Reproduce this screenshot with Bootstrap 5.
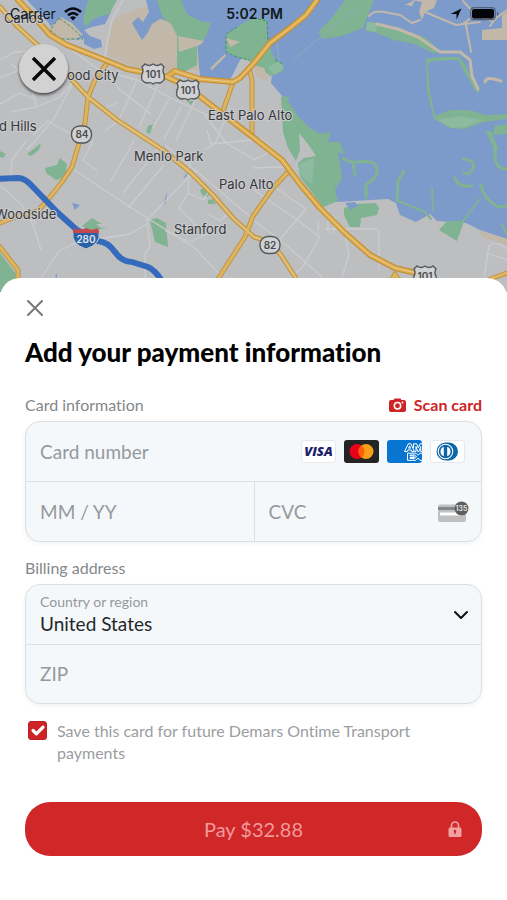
<!DOCTYPE html>
<html lang="en">
<head>
<meta charset="utf-8">
<meta name="viewport" content="width=device-width, initial-scale=1">
<title>Add your payment information</title>
<link href="https://cdn.jsdelivr.net/npm/bootstrap@5.3.0/dist/css/bootstrap.min.css" rel="stylesheet">
<style>
  body { font-family: Lato, "Open Sans", sans-serif; font-variant-ligatures: none; background: #fff; color: #111; }
  .map-area { height: 292px; background: #bdbec0; }
  .map-area > svg { display: block; width: 100%; height: 100%; }
  .map-area text { font-family: Inter, Roboto, sans-serif; }
  .map-label { font-size: 13px; fill: #35373a; stroke: #c9cacc; stroke-width: 2px; paint-order: stroke; }
  .status-bar { font-family: Inter, sans-serif; font-size: 14px; line-height: 28px; color: #101820; padding: 0 8px 0 10px; }
  .status-bar > * { flex: 1 1 0; }
  .map-close { top: 44px; left: 19px; width: 49px; height: 49px; background: #d2d2d2; box-shadow: 0 2px 3px rgba(0,0,0,.6); }
  .sheet { margin-top: -14px; border-radius: 20px 20px 0 0; padding: 20px 25px 44px; }
  .sheet-close { width: 20px; height: 20px; }
  .sheet-title { font-size: 26px; line-height: 32px; font-weight: 900; color: #000; margin: 18px 0 25px; }
  .caption { font-size: 16px; line-height: 24px; color: #858789; }
  .billing-caption { margin: 14px 0 4px; }
  .scan { font-size: 16px; line-height: 24px; color: #cf2427; }
  .field-box { background: #f4f8fb; border: 1px solid #dcdfe1; border-radius: 15px; box-shadow: 0 2px 5px rgba(0,0,0,.05); }
  .field-row { height: 59px; padding: 0 12px 0 14px; }
  .field-row + .field-row, .split { border-top: 1px solid #dcdfe1; }
  .split .field-row + .field-row { border-top: 0; border-left: 1px solid #dcdfe1; }
  .field-row .form-control { font-size: 19px; line-height: 28px; color: #222; min-width: 0; }
  .field-row .form-control::placeholder { color: #96999c; opacity: 1; }
  .region-label { font-size: 14px; line-height: 18px; color: #96999c; }
  .region-select { appearance: none; font-size: 19px; line-height: 26px; color: #24272a; outline-offset: 2px; }
  .save-row { gap: 10px; padding-right: 40px; }
  .save-check.form-check-input { width: 19px; height: 19px; margin: 1px 0 0 3px; border-radius: 3px; }
  .save-check.form-check-input:checked { background-color: #cf2427; border-color: #b92024; background-size: 22px 22px; }
  .save-text { font-size: 16px; line-height: 22px; color: #9b9d9f; }
  .pay { height: 54px; border-radius: 25px; background: #d02729; color: #f29a9b; font-size: 20px; margin-top: 38px; }
  .pay:hover { background: #b92024; color: #f7b5b5; }
  .pay-lock { right: 20px; top: 18px; }
  .brand text { font-family: "Open Sans", sans-serif; }
</style>
<script src="https://cdn.jsdelivr.net/npm/bootstrap@5.3.0/dist/js/bootstrap.bundle.min.js"></script>
</head>
<body>
<div class="min-vh-100 d-flex flex-column">
  <header class="map-area position-relative overflow-hidden">
    <svg viewBox="0 0 507 292" preserveAspectRatio="xMidYMin slice" role="img" aria-label="Map of Palo Alto area">
      <rect width="507" height="292" fill="#bdbec0"/>
      <!-- salt flats -->
      <path fill="#c1b8aa" d="M118 16 135 10 160 0H200V70L172 72 150 69 128 65 108 56 107 40 112 24Z"/>
      <!-- water -->
      <g fill="#7c9aca">
        <path d="M27 0H115L110 14 105 24 92 27 84 30 90 36 101 40 102 47 94 49 84 44 84 38 72 40 58 38 48 22Z"/>
        <path d="M146 0H160L165 15 171 22 160 19 152 24 147 34 142 40 136 30 132 23 138 17 143 22 149 12Z"/>
        <path d="M178 0H507V239L480 230 466 223 437 221 430 214 416 222 400 215 396 203 388 199 336 202 326 150 310 130 296 117 283 97 271 83 273 66 265 44 240 60 230 80 200 77 197 41 178 36Z"/>
      </g>
      <!-- parks and marshes -->
      <g fill="#80b391">
        <path d="M88 0H117L109 14 95 18 85 27 83 18Z"/>
        <path d="M157 0H181L187 14 200 21 211 23 207 34 202 43 197 43 197 65 184 72 177 70 177 36 171 24 163 18Z"/>
        <path d="M226 34 237 27 252 18 266 19 268 42 275 60 283 64 282 72 270 76 252 62 237 57 226 52Z"/>
        <path d="M345 0H374L363 28 342 36 323 39 318 32 330 20Z"/>
        <path d="M367 21 381 24 402 30 425 37 439 50 434 54 415 44 394 40 374 32 366 31Z"/>
        <path d="M426 59 440 57 460 57 467 68 474 80 480 92 476 92 465 73 458 60 432 61 428 64 430 91 435 116 450 110 470 110 485 115 507 114V119L484 122 465 129 450 128 434 119 427 91Z"/>
        <path d="M281 97 289 96 288 101 298 116 310 128 320 134 331 132 328 142 340 142 344 154 338 152 342 178 335 190 338 201 323 207 311 191 300 177 298 163 304 158 316 156 308 144 299 133 300 150 296 161 288 148 283 132Z"/>
        <path d="M344 208 356 204 376 203 379 208 377 215 361 218 360 227 350 227 344 215Z"/>
        <path d="M447 221 464 221 457 241 447 235 439 230Z"/>
        <path d="M150 220 157 218 166 223 168 247 155 242Z"/>
        <path d="M45 168 57 165 60 158 67 164 65 177 56 180 46 173Z"/>
        <path d="M27 154 41 143 39 150 31 156ZM0 151 6 154 3 158 0 157ZM148 126 153 124 150 134 146 132ZM187 101 194 101 191 105ZM200 190 206 187 210 193 208 197 202 195ZM208 200 213 199 216 204 208 204Z"/>
        <path d="M82 226 92 218 102 224 96 224 101 228 108 227 98 230 87 229Z"/>
        <path d="M0 253 16 274 17 292H0ZM494 126 507 124V134L493 135ZM485 131 491 131 499 150 494 148Z"/>
      </g>
      <g fill="none" stroke="#80b391" stroke-linecap="round" stroke-linejoin="round">
        <path stroke-width="3" d="M343 158Q350 163 357 162T370 162 377 169 372 180 366 185 366 198M353 163 355 175M404 171 398 181 397 200M463 159Q476 160 473 168T464 173M455 178Q458 188 472 186M492 140Q496 147 495 158 497 170 507 169M481 185Q484 200 499 207L507 206"/>
        <path stroke-width="2" d="M396 200 425 212 431 219M432 188 433 210M463 221 480 199M502 225 507 235"/>
      </g>
      <path fill="#8dbb9f" d="M438 120 460 116 482 120 465 127 452 128ZM300 163 314 158 312 185 299 174ZM268 67 280 61 284 69 274 75ZM367 22 377 23 376 32 366 30Z"/>
      <g fill="#c1b8aa">
        <path d="M178 36 204 41 200 45 179 52ZM226 38 240 42 230 47ZM210 68 225 54 226 56 212 70ZM48 29 61 17 72 23 83 35 74 40 58 38Z"/>
        <path d="M410 0H437L434 8 425 12 422 20 419 12 422 2ZM482 30 502 28V15L507 12V40H482ZM405 5 415 0 412 6Z"/>
        <path d="M480 231 507 239V245L482 237ZM254 65 264 68 269 82 256 76Z"/>
      </g>
      <g fill="none" stroke="#c1b8aa" stroke-linecap="round" stroke-linejoin="round">
        <path stroke-width="2" d="M369 16Q374 10 384 12L400 15 412 23 420 20M425 12 456 25 480 22M463 1 476 15 492 21 507 10M466 25 471 52M477 13 463 24M490 26 497 17"/>
        <path stroke-width="3" d="M377 24 398 29 418 37 440 52 460 52 470 60 472 76 478 89M485 82Q486 77 494 79L501 81"/>
      </g>
      <g fill="none" stroke="#3f9163" stroke-width="1" stroke-dasharray="3 2"><path d="M59 18 50 30 60 39H83Q76 30 59 18M237 27 226 34V52L237 57 250 60M253 18 267 21 268 42M275 60 283 64"/></g>
      <path fill="none" stroke="#8eadb9" d="M293 60 325 33 361 5M277 42 279 60"/>
      <path fill="#7c9aca" d="M72 203 80 205 75 210ZM163 205 167 192 166 203ZM345 203 355 202 358 206 351 210ZM183 178 188 172 186 177ZM55 276 57 273V278Z"/>
      <!-- local streets -->
      <g fill="none" stroke="#cacccf" stroke-width="1.3" stroke-linejoin="round">
        <path d="M0 60 15 52 43 50M0 104 20 93 37 100M10 63 30 80 36 107 10 112M0 78 27 67M36 107 60 97 73 82M27 150 53 120 72 85M10 182 12 160 27 140M33 135 48 121 74 136"/>
        <path d="M123 0 112 20 107 45 104 62M67 47 98 69 137 80 167 96 205 114 224 119M137 80 119 120 105 131M158 85 139 127M169 99 153 128M181 107 164 139M76 87 103 109 118 102M105 68 119 89 151 114M64 52 60 65M196 98 176 141"/>
        <path d="M70 167 104 190 147 218 165 229 195 248 220 275M93 141 83 160 97 171M110 182 134 141M123 193 161 145M128 208 164 165M147 220 188 178 198 170M165 145 190 166 221 192 254 220M230 107 216 142 205 150M205 115 226 143 253 159"/>
        <path d="M0 185 22 205 33 225 41 250M36 224 31 216 50 195M98 239 130 234 148 223M80 241 59 251 51 263 41 278M147 219 150 247 145 254 145 278M165 231 190 242 214 231M190 160 188 193 179 208 198 227M188 193 204 200 210 188M207 213 220 221 228 213"/>
        <path d="M254 190 290 215 320 237M253 220 285 244 322 277M274 187 306 209M253 168 285 167M320 237 302 268 290 277M306 209 275 245M318 222V234M328 210V233M334 217V234M345 234 349 255 342 277M379 230V270M325 229H377M484 277 489 246Q497 240 507 249M486 253 507 260M207 130 211 144 253 140M260 138 274 150 253 160"/>
      </g>
      <!-- highways -->
      <g fill="none" stroke-linecap="round" stroke-linejoin="round">
        <g stroke="#bd9448" stroke-width="5">
          <path d="M0 7 18 27 43 50 72 80 88 97 117 120 143 137 163 150 190 172 213 195 233 218 254 237 270 242 281 255 297 280"/>
          <path d="M107 63 95 80 88 97 85 123 77 150 72 167 62 182 50 197 38 211 15 217 0 223M233 82 223 111M249 68 252 80V132M288 172 273 188 253 216 245 237 218 279M0 247 18 270V280M390 282 395 274 400 282M490 279 507 273"/>
        </g>
        <g stroke="#deb45e" stroke-width="3">
          <path d="M0 7 18 27 43 50 72 80 88 97 117 120 143 137 163 150 190 172 213 195 233 218 254 237 270 242 281 255 297 280"/>
          <path d="M107 63 95 80 88 97 85 123 77 150 72 167 62 182 50 197 38 211 15 217 0 223M233 82 223 111M249 68 252 80V132M288 172 273 188 253 216 245 237 218 279M0 247 18 270V280M390 282 395 274 400 282M490 279 507 273"/>
        </g>
        <path stroke="#bf8d34" stroke-width="6" d="M18 0 37 20 50 35 67 45 110 62 127 69 143 72 167 77 187 86 207 102 254 138 282 160 300 184 320 208 345 233 370 255 395 268 425 275M168 76 175 71 200 79 233 82 240 78 254 63 270 43 290 28 306 15 317 0"/>
        <path stroke="#dfad4c" stroke-width="4" d="M18 0 37 20 50 35 67 45 110 62 127 69 143 72 167 77 187 86 207 102 254 138 282 160 300 184 320 208 345 233 370 255 395 268 425 275M168 76 175 71 200 79 233 82 240 78 254 63 270 43 290 28 306 15 317 0"/>
        <path stroke="#e4cb94" stroke-width="1" d="M18 0 37 20 50 35 67 45 110 62 127 69 143 72 167 77 187 86 207 102 254 138 282 160 300 184 320 208 345 233 370 255 395 268 425 275M0 7 18 27 43 50 72 80 88 97 117 120 143 137 163 150 190 172 213 195 233 218 254 237 270 242 281 255 297 280M175 71 200 79 233 82 240 78 254 63 270 43 290 28 306 15 317 0"/>
        <path stroke="#356bbd" stroke-width="6" d="M-3 179 18 178Q25 178 32 186L57 212 77 230 98 241Q108 242 115 252T132 262L148 267Q155 270 162 281"/>
      </g>
      <!-- route shields -->
      <defs><path id="us" d="M-11-7-8-10Q-4-7 0-10 4-7 8-10L11-7Q9-3 11 0 13 8 6 9 2 8 0 10-2 8-6 9-13 8-11 0-9-3-11-7Z"/></defs>
      <g fill="#d0d1d2" stroke="#55585b" stroke-width="1.4">
        <use href="#us" x="153" y="74"/><use href="#us" x="188" y="90"/><use href="#us" x="425" y="276"/>
        <rect x="71.500" y="126" width="20" height="17" rx="8"/><rect x="260" y="236.500" width="20" height="17" rx="8"/>
      </g>
      <path fill="#2861a8" stroke="#c9cacc" d="M73 232H99Q101 244 86 249 71 244 73 232Z"/>
      <path fill="#c6484d" d="M73 231 75 228Q80 231 86 228 92 231 97 228L99 231V233H73Z"/>
      <g font-size="10" font-weight="600" text-anchor="middle" fill="#484b4e">
        <text x="153" y="78">101</text><text x="188" y="94">101</text><text x="425" y="280">101</text>
        <text x="82" y="138">84</text><text x="270" y="249">82</text>
        <text x="86" y="243" fill="#e0e3e8">280</text>
      </g>
      <g class="map-label">
        <text x="4" y="23">Carlos</text><text x="67" y="80">ood City</text><text x="-1" y="131">d Hills</text>
        <text x="208" y="120">East Palo Alto</text><text x="134" y="161">Menlo Park</text><text x="219" y="189">Palo Alto</text>
        <text x="-5" y="219">Woodside</text><text x="174" y="234">Stanford</text>
      </g>
    </svg>
    <div class="status-bar position-absolute top-0 start-0 w-100 d-flex align-items-center">
      <div class="d-flex align-items-center gap-2">
        <span>Carrier</span>
        <svg width="18" height="14" viewBox="0 0 18 14" aria-hidden="true"><g fill="none" stroke="#080c12" stroke-width="2.600"><path d="M1 5Q9-2 17 5M4 8.300Q9 4 14 8.300"/></g><path fill="#080c12" d="M6 10.500Q9 8 12 10.500L9 13.500Z"/></svg>
      </div>
      <div class="text-center fw-semibold">5:02 PM</div>
      <div class="d-flex align-items-center justify-content-end gap-2">
        <svg width="12" height="12" viewBox="0 0 12 12" aria-hidden="true"><path fill="#080c12" d="M11.500.500 6.500 11.500V6H.500Z"/></svg>
        <svg width="29" height="14" viewBox="0 0 29 14" aria-hidden="true"><rect x=".7" y=".7" width="24.600" height="12" rx="3.500" fill="none" stroke="#4d6080" stroke-width="1.200"/><rect x="2" y="2" width="22" height="9.500" rx="2" fill="#030508"/><path d="M27 4.500V9Q28.500 8 28.500 6.700T27 4.500" fill="#4d6080"/></svg>
      </div>
    </div>
    <button type="button" class="map-close position-absolute btn border-0 rounded-circle p-0 d-flex align-items-center justify-content-center" aria-label="Close map">
      <svg width="26" height="26" viewBox="0 0 26 26" aria-hidden="true"><path d="M2 2 24 24M24 2 2 24" stroke="#080808" stroke-width="3.400"/></svg>
    </button>
  </header>

  <main class="sheet position-relative bg-white flex-grow-1">
    <button type="button" class="sheet-close btn border-0 p-0 d-flex align-items-center justify-content-center" aria-label="Close">
      <svg width="16" height="16" viewBox="0 0 16 16" aria-hidden="true"><path d="M1 1 15 15M15 1 1 15" stroke="#77797b" stroke-width="2" stroke-linecap="round"/></svg>
    </button>
    <h1 class="sheet-title">Add your payment information</h1>
    <form>
      <div class="d-flex justify-content-between align-items-center mb-1">
        <span class="caption">Card information</span>
        <a href="#" class="scan text-decoration-none fw-bold d-flex align-items-center gap-2">
          <svg width="17" height="14" viewBox="0 0 17 14" aria-hidden="true"><path fill="#cf2427" d="M2 2H4.500L5.500.500H11.500L12.500 2H15Q17 2 17 4V12Q17 14 15 14H2Q0 14 0 12V4Q0 2 2 2Z"/><circle cx="8.500" cy="7.700" r="3.200" fill="none" stroke="#fff" stroke-width="1.500"/><circle cx="13.500" cy="4.500" r=".9" fill="#fff"/></svg>
          <span>Scan card</span>
        </a>
      </div>
      <div class="field-box overflow-hidden">
        <div class="field-row d-flex align-items-center">
          <input class="form-control border-0 bg-transparent p-0 shadow-none" type="text" inputmode="numeric" placeholder="Card number" aria-label="Card number">
          <div class="brand d-flex flex-shrink-0 gap-2 pe-1">
            <svg width="35" height="23" viewBox="0 0 35 23" role="img" aria-label="Visa"><rect x=".5" y=".5" width="34" height="22" rx="2.500" fill="#fff" stroke="#e5e8ec"/><text x="17.500" y="16" text-anchor="middle" font-size="13" font-weight="800" font-style="italic" fill="#20206b">VISA</text></svg>
            <svg width="35" height="23" viewBox="0 0 35 23" role="img" aria-label="Mastercard"><rect width="35" height="23" rx="3" fill="#242424"/><circle cx="13" cy="11.500" r="7.500" fill="#eb001b"/><circle cx="22" cy="11.500" r="7.500" fill="#f79e1b"/><path fill="#ff5f00" d="M17.500 5.500A7.500 7.500 0 0 1 17.500 17.500 7.500 7.500 0 0 1 17.500 5.500Z"/></svg>
            <svg width="35" height="23" viewBox="0 0 35 23" role="img" aria-label="American Express"><rect width="35" height="23" rx="3" fill="#0875d0"/><g fill="none" stroke="#fff" stroke-width="1"><path d="M17.500 11.500 21.300 3.800H24L27.300 11.500H24.800L24.200 10H20.900L20.300 11.500ZM21.700 8.200H23.600L22.600 5.900ZM26.500 8V3.800H29.700L31.300 8 33 3.800H35M27.500 11.500H29V6.500L30.700 11.500H32L33.700 6.500V11.500H35M35 13.200H32.900L31 15.200 29 13.200H20.500V20.300H28.800L31 18.100 32.900 20.300H35M27.500 15H23V15.900H27.200V17.500H23V18.500H27.500L29.600 16.700Z"/></g></svg>
            <svg width="35" height="23" viewBox="0 0 35 23" role="img" aria-label="Diners Club"><rect x=".5" y=".5" width="34" height="22" rx="2.500" fill="#fff" stroke="#e5e8ec"/><path fill="#0c65a4" d="M15.500 2.500H19A9 9 0 0 1 19 20.500H15.500A9 9 0 0 1 15.500 2.500Z"/><circle cx="15.500" cy="11.500" r="7.800" fill="#fff"/><circle cx="15.500" cy="11.500" r="6.700" fill="#0c65a4"/><path fill="#fff" d="M13.800 6.800V16.200A5 5 0 0 1 13.800 6.800ZM17.200 6.800V16.200A5 5 0 0 0 17.200 6.800Z"/></svg>
          </div>
        </div>
        <div class="split d-flex">
          <div class="field-row w-50 d-flex align-items-center">
            <input class="form-control border-0 bg-transparent p-0 shadow-none" type="text" inputmode="numeric" placeholder="MM / YY" aria-label="Expiration date">
          </div>
          <div class="field-row w-50 d-flex align-items-center">
            <input class="form-control border-0 bg-transparent p-0 shadow-none" type="text" inputmode="numeric" placeholder="CVC" aria-label="CVC">
            <svg class="flex-shrink-0" width="31" height="22" viewBox="0 0 31 22" aria-hidden="true"><rect y="3.500" width="28" height="17.500" rx="2" fill="#bfc0c1"/><path fill="#858687" d="M0 6H28V9H0Z"/><path fill="#fff" d="M2 11.500H25V14.500H2Z"/><circle cx="23.500" cy="7.500" r="7" fill="#5c5e60"/><text x="23.500" y="10.200" text-anchor="middle" font-family="Inter, sans-serif" font-size="7" font-weight="600" fill="#e8e8e8">135</text></svg>
          </div>
        </div>
      </div>
      <div class="caption billing-caption">Billing address</div>
      <div class="field-box overflow-hidden">
        <div class="field-row d-flex align-items-center">
          <div class="flex-grow-1 d-flex flex-column">
            <label class="region-label" for="region">Country or region</label>
            <select id="region" class="region-select border-0 bg-transparent p-0 w-100"><option>United States</option></select>
          </div>
          <svg class="flex-shrink-0" width="16" height="10" viewBox="0 0 16 10" aria-hidden="true"><path d="M2 2 8 8 14 2" fill="none" stroke="#0c0e10" stroke-width="2" stroke-linecap="round" stroke-linejoin="round"/></svg>
        </div>
        <div class="field-row d-flex align-items-center">
          <input class="form-control border-0 bg-transparent p-0 shadow-none" type="text" placeholder="ZIP" aria-label="ZIP">
        </div>
      </div>
      <div class="save-row d-flex mt-3">
        <input class="save-check form-check-input flex-shrink-0" type="checkbox" id="save" checked>
        <label class="save-text" for="save">Save this card for future Demars Ontime Transport payments</label>
      </div>
      <button type="button" class="pay btn border-0 w-100 position-relative">Pay $32.88
        <svg class="pay-lock position-absolute" width="14" height="18" viewBox="0 0 14 18" aria-hidden="true"><path d="M3.500 8V5.500A3.500 3.500 0 0 1 10.500 5.500V8" fill="none" stroke="#f2a1a2" stroke-width="1.700"/><rect x=".5" y="7.500" width="13" height="9.500" rx="1.500" fill="#f2a1a2"/><path d="M7 11V14" stroke="#d02729" stroke-width="1.500"/><circle cx="7" cy="11" r="1.300" fill="#d02729"/></svg>
      </button>
    </form>
  </main>
</div>
</body>
</html>
